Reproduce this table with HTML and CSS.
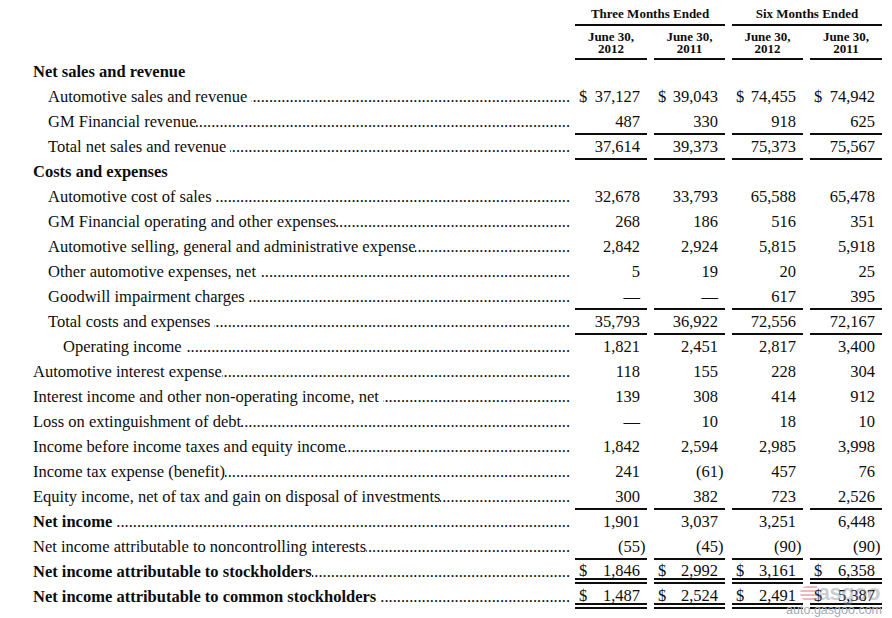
FILE: index.html
```html
<!DOCTYPE html>
<html lang="en">
<head>
<meta charset="utf-8">
<title>Consolidated Income Statements</title>
<link rel="stylesheet" href="styles.css">
</head>
<body>
<div class="page">
<table class="stmt">
  <colgroup>
    <col class="c-label"><col class="c-n1"><col class="c-n2"><col class="c-n3"><col class="c-n4">
  </colgroup>
  <thead>
    <tr class="h1">
      <th></th>
      <th colspan="2" class="period">Three Months Ended</th>
      <th colspan="2" class="period">Six Months Ended</th>
    </tr>
    <tr class="h2">
      <th></th>
      <th class="date">June 30,<br>2012</th>
      <th class="date">June 30,<br>2011</th>
      <th class="date">June 30,<br>2012</th>
      <th class="date">June 30,<br>2011</th>
    </tr>
  </thead>
  <tbody>
    <tr>
      <td class="lbl"><div class="li l0"><span class="t b">Net sales and revenue</span></div></td>
      <td></td><td></td><td></td><td></td>
    </tr>
    <tr>
      <td class="lbl"><div class="li l1"><span class="t">Automotive sales and revenue</span><span class="lead sp"></span></div></td>
      <td class="num"><span class="cur">$</span>37,127</td>
      <td class="num"><span class="cur">$</span>39,043</td>
      <td class="num"><span class="cur">$</span>74,455</td>
      <td class="num"><span class="cur">$</span>74,942</td>
    </tr>
    <tr class="ul">
      <td class="lbl"><div class="li l1"><span class="t">GM Financial revenue</span><span class="lead"></span></div></td>
      <td class="num">487</td><td class="num">330</td><td class="num">918</td><td class="num">625</td>
    </tr>
    <tr class="ul">
      <td class="lbl"><div class="li l1"><span class="t">Total net sales and revenue</span><span class="lead sp"></span></div></td>
      <td class="num">37,614</td><td class="num">39,373</td><td class="num">75,373</td><td class="num">75,567</td>
    </tr>
    <tr>
      <td class="lbl"><div class="li l0"><span class="t b">Costs and expenses</span></div></td>
      <td></td><td></td><td></td><td></td>
    </tr>
    <tr>
      <td class="lbl"><div class="li l1"><span class="t">Automotive cost of sales</span><span class="lead sp"></span></div></td>
      <td class="num">32,678</td><td class="num">33,793</td><td class="num">65,588</td><td class="num">65,478</td>
    </tr>
    <tr>
      <td class="lbl"><div class="li l1"><span class="t">GM Financial operating and other expenses</span><span class="lead"></span></div></td>
      <td class="num">268</td><td class="num">186</td><td class="num">516</td><td class="num">351</td>
    </tr>
    <tr>
      <td class="lbl"><div class="li l1"><span class="t">Automotive selling, general and administrative expense</span><span class="lead"></span></div></td>
      <td class="num">2,842</td><td class="num">2,924</td><td class="num">5,815</td><td class="num">5,918</td>
    </tr>
    <tr>
      <td class="lbl"><div class="li l1"><span class="t">Other automotive expenses, net</span><span class="lead sp"></span></div></td>
      <td class="num">5</td><td class="num">19</td><td class="num">20</td><td class="num">25</td>
    </tr>
    <tr class="ul">
      <td class="lbl"><div class="li l1"><span class="t">Goodwill impairment charges</span><span class="lead sp"></span></div></td>
      <td class="num">&mdash;</td><td class="num">&mdash;</td><td class="num">617</td><td class="num">395</td>
    </tr>
    <tr class="ul">
      <td class="lbl"><div class="li l1"><span class="t">Total costs and expenses</span><span class="lead sp"></span></div></td>
      <td class="num">35,793</td><td class="num">36,922</td><td class="num">72,556</td><td class="num">72,167</td>
    </tr>
    <tr>
      <td class="lbl"><div class="li l2"><span class="t">Operating income</span><span class="lead sp"></span></div></td>
      <td class="num">1,821</td><td class="num">2,451</td><td class="num">2,817</td><td class="num">3,400</td>
    </tr>
    <tr>
      <td class="lbl"><div class="li l0"><span class="t">Automotive interest expense</span><span class="lead"></span></div></td>
      <td class="num">118</td><td class="num">155</td><td class="num">228</td><td class="num">304</td>
    </tr>
    <tr>
      <td class="lbl"><div class="li l0"><span class="t">Interest income and other non-operating income, net</span><span class="lead sp"></span></div></td>
      <td class="num">139</td><td class="num">308</td><td class="num">414</td><td class="num">912</td>
    </tr>
    <tr>
      <td class="lbl"><div class="li l0"><span class="t">Loss on extinguishment of debt</span><span class="lead"></span></div></td>
      <td class="num">&mdash;</td><td class="num">10</td><td class="num">18</td><td class="num">10</td>
    </tr>
    <tr>
      <td class="lbl"><div class="li l0"><span class="t">Income before income taxes and equity income</span><span class="lead"></span></div></td>
      <td class="num">1,842</td><td class="num">2,594</td><td class="num">2,985</td><td class="num">3,998</td>
    </tr>
    <tr>
      <td class="lbl"><div class="li l0"><span class="t">Income tax expense (benefit)</span><span class="lead"></span></div></td>
      <td class="num">241</td><td class="num"><span class="neg">(61)</span></td><td class="num">457</td><td class="num">76</td>
    </tr>
    <tr class="ul">
      <td class="lbl"><div class="li l0"><span class="t">Equity income, net of tax and gain on disposal of investments</span><span class="lead"></span></div></td>
      <td class="num">300</td><td class="num">382</td><td class="num">723</td><td class="num">2,526</td>
    </tr>
    <tr>
      <td class="lbl"><div class="li l0"><span class="t b">Net income</span><span class="lead sp"></span></div></td>
      <td class="num">1,901</td><td class="num">3,037</td><td class="num">3,251</td><td class="num">6,448</td>
    </tr>
    <tr class="ul">
      <td class="lbl"><div class="li l0"><span class="t">Net income attributable to noncontrolling interests</span><span class="lead"></span></div></td>
      <td class="num"><span class="neg">(55)</span></td><td class="num"><span class="neg">(45)</span></td><td class="num"><span class="neg">(90)</span></td><td class="num"><span class="neg">(90)</span></td>
    </tr>
    <tr class="dbl">
      <td class="lbl"><div class="li l0"><span class="t b">Net income attributable to stockholders</span><span class="lead"></span></div></td>
      <td class="num"><span class="cur">$</span>1,846</td>
      <td class="num"><span class="cur">$</span>2,992</td>
      <td class="num"><span class="cur">$</span>3,161</td>
      <td class="num"><span class="cur">$</span>6,358</td>
    </tr>
    <tr class="dbl">
      <td class="lbl"><div class="li l0"><span class="t b">Net income attributable to common stockholders</span><span class="lead sp"></span></div></td>
      <td class="num"><span class="cur">$</span>1,487</td>
      <td class="num"><span class="cur">$</span>2,524</td>
      <td class="num"><span class="cur">$</span>2,491</td>
      <td class="num"><span class="cur">$</span>5,387</td>
    </tr>
  </tbody>
</table>
<div class="watermark">
  <div class="wm-logo"><span class="wm-g"></span><span class="wm-name">asgoo</span></div>
  <div class="wm-url">auto.gasgoo.com</div>
</div>
</div>
</body>
</html>
```
FILE: styles.css
```css
html, body {
  margin: 0;
  padding: 0;
  background: #fff;
}

.page {
  position: relative;
  width: 892px;
  height: 618px;
  overflow: hidden;
}

.stmt {
  border-collapse: separate;
  border-spacing: 7px 0;
  table-layout: fixed;
  width: 889px;
  font-family: "Liberation Serif", "Times New Roman", serif;
  font-size: 16.5px;
  color: #0d0d0d;
}

.c-label { width: 561px; }
.c-n1 { width: 72px; }
.c-n2 { width: 71px; }
.c-n3 { width: 71px; }
.c-n4 { width: 72px; }

.stmt th,
.stmt td {
  padding: 0;
}

/* Header */
.stmt th {
  font-size: 13px;
  font-weight: bold;
  text-align: center;
  vertical-align: top;
  color: #0d0d0d;
}

.h1 {
  height: 26px;
}

.h1 th.period {
  box-shadow: inset 0 -2px 0 #0d0d0d;
  line-height: 24px;
  padding-top: 2px;
}

.h2 {
  height: 34px;
}

.h2 th.date {
  box-shadow: inset 0 -2px 0 #0d0d0d;
  padding-top: 5px;
  line-height: 12px;
}

/* Body rows */
.stmt tbody tr {
  height: 25px;
}

.stmt tbody td {
  height: 25px;
  line-height: 24px;
  vertical-align: top;
  white-space: nowrap;
}

.li {
  display: flex;
  align-items: baseline;
}

.l0 { padding-left: 26px; }
.l1 { padding-left: 41px; }
.l2 { padding-left: 56px; }

.t {
  flex: none;
}

.b {
  font-weight: bold;
}

.lead {
  flex: 1;
  min-width: 0;
  overflow: hidden;
  direction: rtl;
  white-space: nowrap;
  margin-right: -2px;
}

.lead::after {
  content: "........................................................................................................................................................................";
}

.lead.sp {
  margin-left: 4px;
}

.num {
  text-align: right;
  padding-right: 7px !important;
  padding-left: 4px !important;
}

.cur {
  float: left;
}

.neg {
  margin-right: -5.5px;
}

.ul td.num {
  box-shadow: inset 0 -2px 0 #0d0d0d;
}

.dbl td.num {
  box-shadow: inset 0 -1px 0 #fff, inset 0 -3px 0 #0d0d0d, inset 0 -5px 0 #fff, inset 0 -7px 0 #0d0d0d;
  line-height: 21px;
}

/* Watermark overlay */
.watermark {
  position: absolute;
  right: 10px;
  bottom: 1px;
  width: 110px;
  display: flex;
  flex-direction: column;
  align-items: flex-end;
  pointer-events: none;
}

.wm-logo {
  display: flex;
  align-items: center;
  gap: 1px;
  opacity: 0.4;
  margin-right: 2px;
}

.wm-g {
  width: 17px;
  height: 15px;
  background: repeating-linear-gradient(180deg, #e0485a 0 2px, transparent 2px 4px);
  border-radius: 8px 0 0 8px;
}

.wm-name {
  font-family: "Liberation Sans", Arial, sans-serif;
  font-size: 22px;
  line-height: 20px;
  font-weight: bold;
  color: #7e8596;
  letter-spacing: -0.5px;
}

.wm-url {
  font-family: "Liberation Sans", Arial, sans-serif;
  font-size: 12.5px;
  line-height: 14px;
  color: #a2aabb;
  margin-top: 0;
}
```
